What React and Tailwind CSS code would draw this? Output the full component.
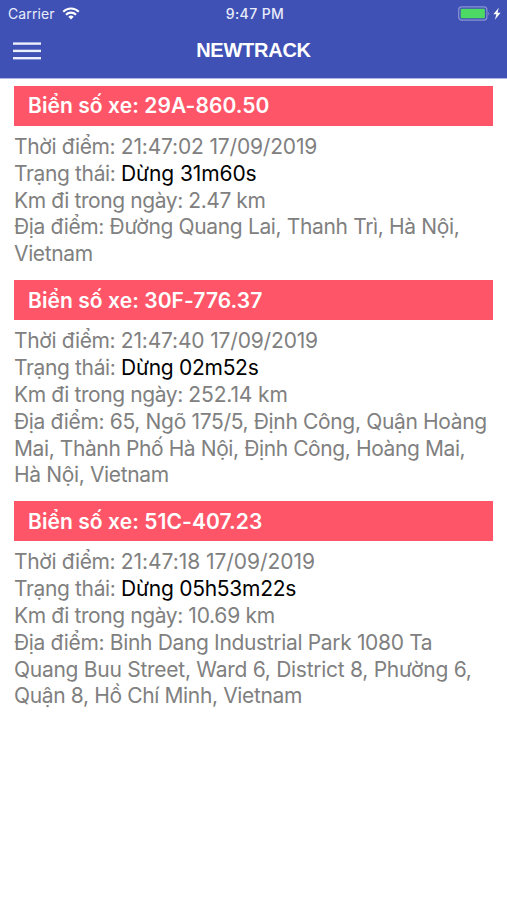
import React from "react";

const vehicles = [
  {
    plate: "29A-860.50",
    time: ["21:47:02 17/09/2019", "tracking-[-0.17px]"],
    status: ["Dừng 31m60s", "tracking-[-0.1px]"],
    distance: ["2.47 km", "tracking-[-0.45px]"],
    address: [
      ["Địa điểm: Đường Quang Lai, Thanh Trì, Hà Nội,", "tracking-[-0.36px]"],
      ["Vietnam", "tracking-[-0.35px]"],
    ],
  },
  {
    plate: "30F-776.37",
    time: ["21:47:40 17/09/2019", "tracking-[-0.17px]"],
    status: ["Dừng 02m52s", "tracking-[-0.28px]"],
    distance: ["252.14 km", "tracking-[-0.13px]"],
    address: [
      ["Địa điểm: 65, Ngõ 175/5, Định Công, Quận Hoàng", "tracking-[-0.34px]"],
      ["Mai, Thành Phố Hà Nội, Định Công, Hoàng Mai,", "tracking-[-0.4px]"],
      ["Hà Nội, Vietnam", "tracking-[-0.35px]"],
    ],
  },
  {
    plate: "51C-407.23",
    time: ["21:47:18 17/09/2019", "tracking-[-0.05px]"],
    status: ["Dừng 05h53m22s", "tracking-[-0.25px]"],
    distance: ["10.69 km", "tracking-[-0.25px]"],
    address: [
      ["Địa điểm: Binh Dang Industrial Park 1080 Ta", "tracking-[-0.34px]"],
      ["Quang Buu Street, Ward 6, District 8, Phường 6,", "tracking-[-0.27px]"],
      ["Quận 8, Hồ Chí Minh, Vietnam", "tracking-[-0.36px]"],
    ],
  },
];

function StatusBar() {
  return (
    <div className="grid h-[27px] grid-cols-3 items-center pl-2 pr-[5px] text-[14px] leading-none text-[#e9ecfb]">
      <div className="flex items-center gap-[7px]">
        <span className="tracking-[0.1px]">Carrier</span>
        <svg width="18" height="13" viewBox="0 0 18 13" fill="none" stroke="#fff" strokeWidth="2.1">
          <path d="M1.2 4.8a11 11 0 0 1 15.6 0" />
          <path d="M4 7.7a7 7 0 0 1 10 0" />
          <path d="M9 12.5 6.3 9.8a3.8 3.8 0 0 1 5.4 0Z" fill="#fff" stroke="none" />
        </svg>
      </div>
      <span className="pt-px text-center text-[14px] font-medium tracking-[0.4px]">9:47 PM</span>
      <svg className="justify-self-end" width="44" height="15" viewBox="0 0 44 15">
        <rect x="0.7" y="0.9" width="28.2" height="13.2" rx="3" fill="none" stroke="#8994d3" strokeWidth="1.2" />
        <rect x="2.7" y="2.8" width="24.2" height="9.4" rx="1" fill="#4cd964" />
        <path d="M30.3 5.5q1.7 2 0 4z" fill="#8994d3" />
        <path d="M40.8 1.7 35.4 8.2h3l-1.5 5.6 5.7-7h-3.1z" fill="#fff" />
      </svg>
    </div>
  );
}

function Header() {
  return (
    <header className="h-[79px] border-b border-[#aeb6e3] bg-[#3f51b5]">
      <StatusBar />
      <div className="grid h-[47px] grid-cols-3 items-center px-[13px]">
        <svg width="28" height="18" viewBox="0 0 28 18" fill="#eceffc">
          <rect y="0.4" width="28" height="2.4" />
          <rect y="7.7" width="28" height="2.4" />
          <rect y="15" width="28" height="2.4" />
        </svg>
        <h1 className="pb-[2px] text-center font-['Liberation_Sans',sans-serif] text-[20px] font-bold tracking-[-0.25px] text-white">NEWTRACK</h1>
      </div>
    </header>
  );
}

function Vehicle({ v }) {
  return (
    <section>
      <h2 className="flex h-[40.4px] items-center bg-[#ff5568] pl-[14px] pt-px text-[21px] font-semibold tracking-[0.07px] text-white">
        Biển số xe: {v.plate}
      </h2>
      <div className="whitespace-nowrap pb-[11.7px] pt-[8.2px] text-[21px] leading-[26.8px] tracking-[-0.36px] text-[#808080]">
        <p>Thời điểm: <span className={v.time[1]}>{v.time[0]}</span></p>
        <p>Trạng thái: <span className={"text-black " + v.status[1]}>{v.status[0]}</span></p>
        <p><span className="tracking-[-0.41px]">Km đi trong ngày: </span><span className={v.distance[1]}>{v.distance[0]}</span></p>
        {v.address.map(([line, tracking]) => <p key={line} className={tracking}>{line}</p>)}
      </div>
    </section>
  );
}

export default function App() {
  return (
    <div className="h-[900px] w-full overflow-hidden bg-white font-['Inter',sans-serif]">
      <Header />
      <main className="px-[14px] pt-[6.5px]">
        {vehicles.map((v) => <Vehicle key={v.plate} v={v} />)}
      </main>
    </div>
  );
}
